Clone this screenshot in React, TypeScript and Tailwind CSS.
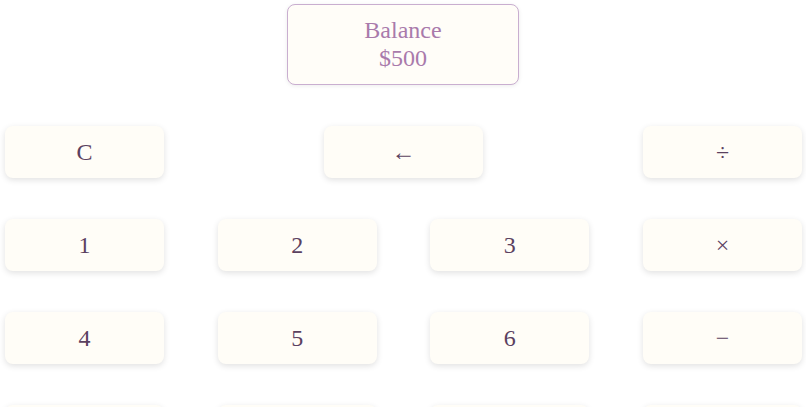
const rows: string[][] = [
  ['1', '2', '3', '×'],
  ['4', '5', '6', '−'],
  ['7', '8', '9', '+'],
]

function Key({ label }: { label: string }) {
  return (
    <button className="h-[52px] w-[159px] rounded-lg bg-[#fffdf7] text-2xl text-[#5b4160] shadow-[0_2px_6px_rgba(0,0,0,0.12)]">
      {label}
    </button>
  )
}

export default function App() {
  return (
    <div className="min-h-screen bg-white font-['Liberation_Serif',serif]">
      <div className="flex justify-center pt-1">
        <div className="flex h-[81px] w-[232px] flex-col items-center justify-center rounded-lg border border-[#c9aed0] bg-[#fffdf8] text-2xl leading-7 text-[#a97aab] shadow-[0_1px_4px_rgba(0,0,0,0.08)]">
          <span className="-mt-0.5">Balance</span>
          <span>$500</span>
        </div>
      </div>
      <div className="flex flex-col gap-[41px] pt-[41px] pl-[5px] pr-[4px]">
        <div className="flex justify-between">
          <Key label="C" />
          <Key label="←" />
          <Key label="÷" />
        </div>
        {rows.map((r, i) => (
          <div key={i} className="flex justify-between">
            {r.map((k) => (
              <Key key={k} label={k} />
            ))}
          </div>
        ))}
      </div>
    </div>
  )
}
